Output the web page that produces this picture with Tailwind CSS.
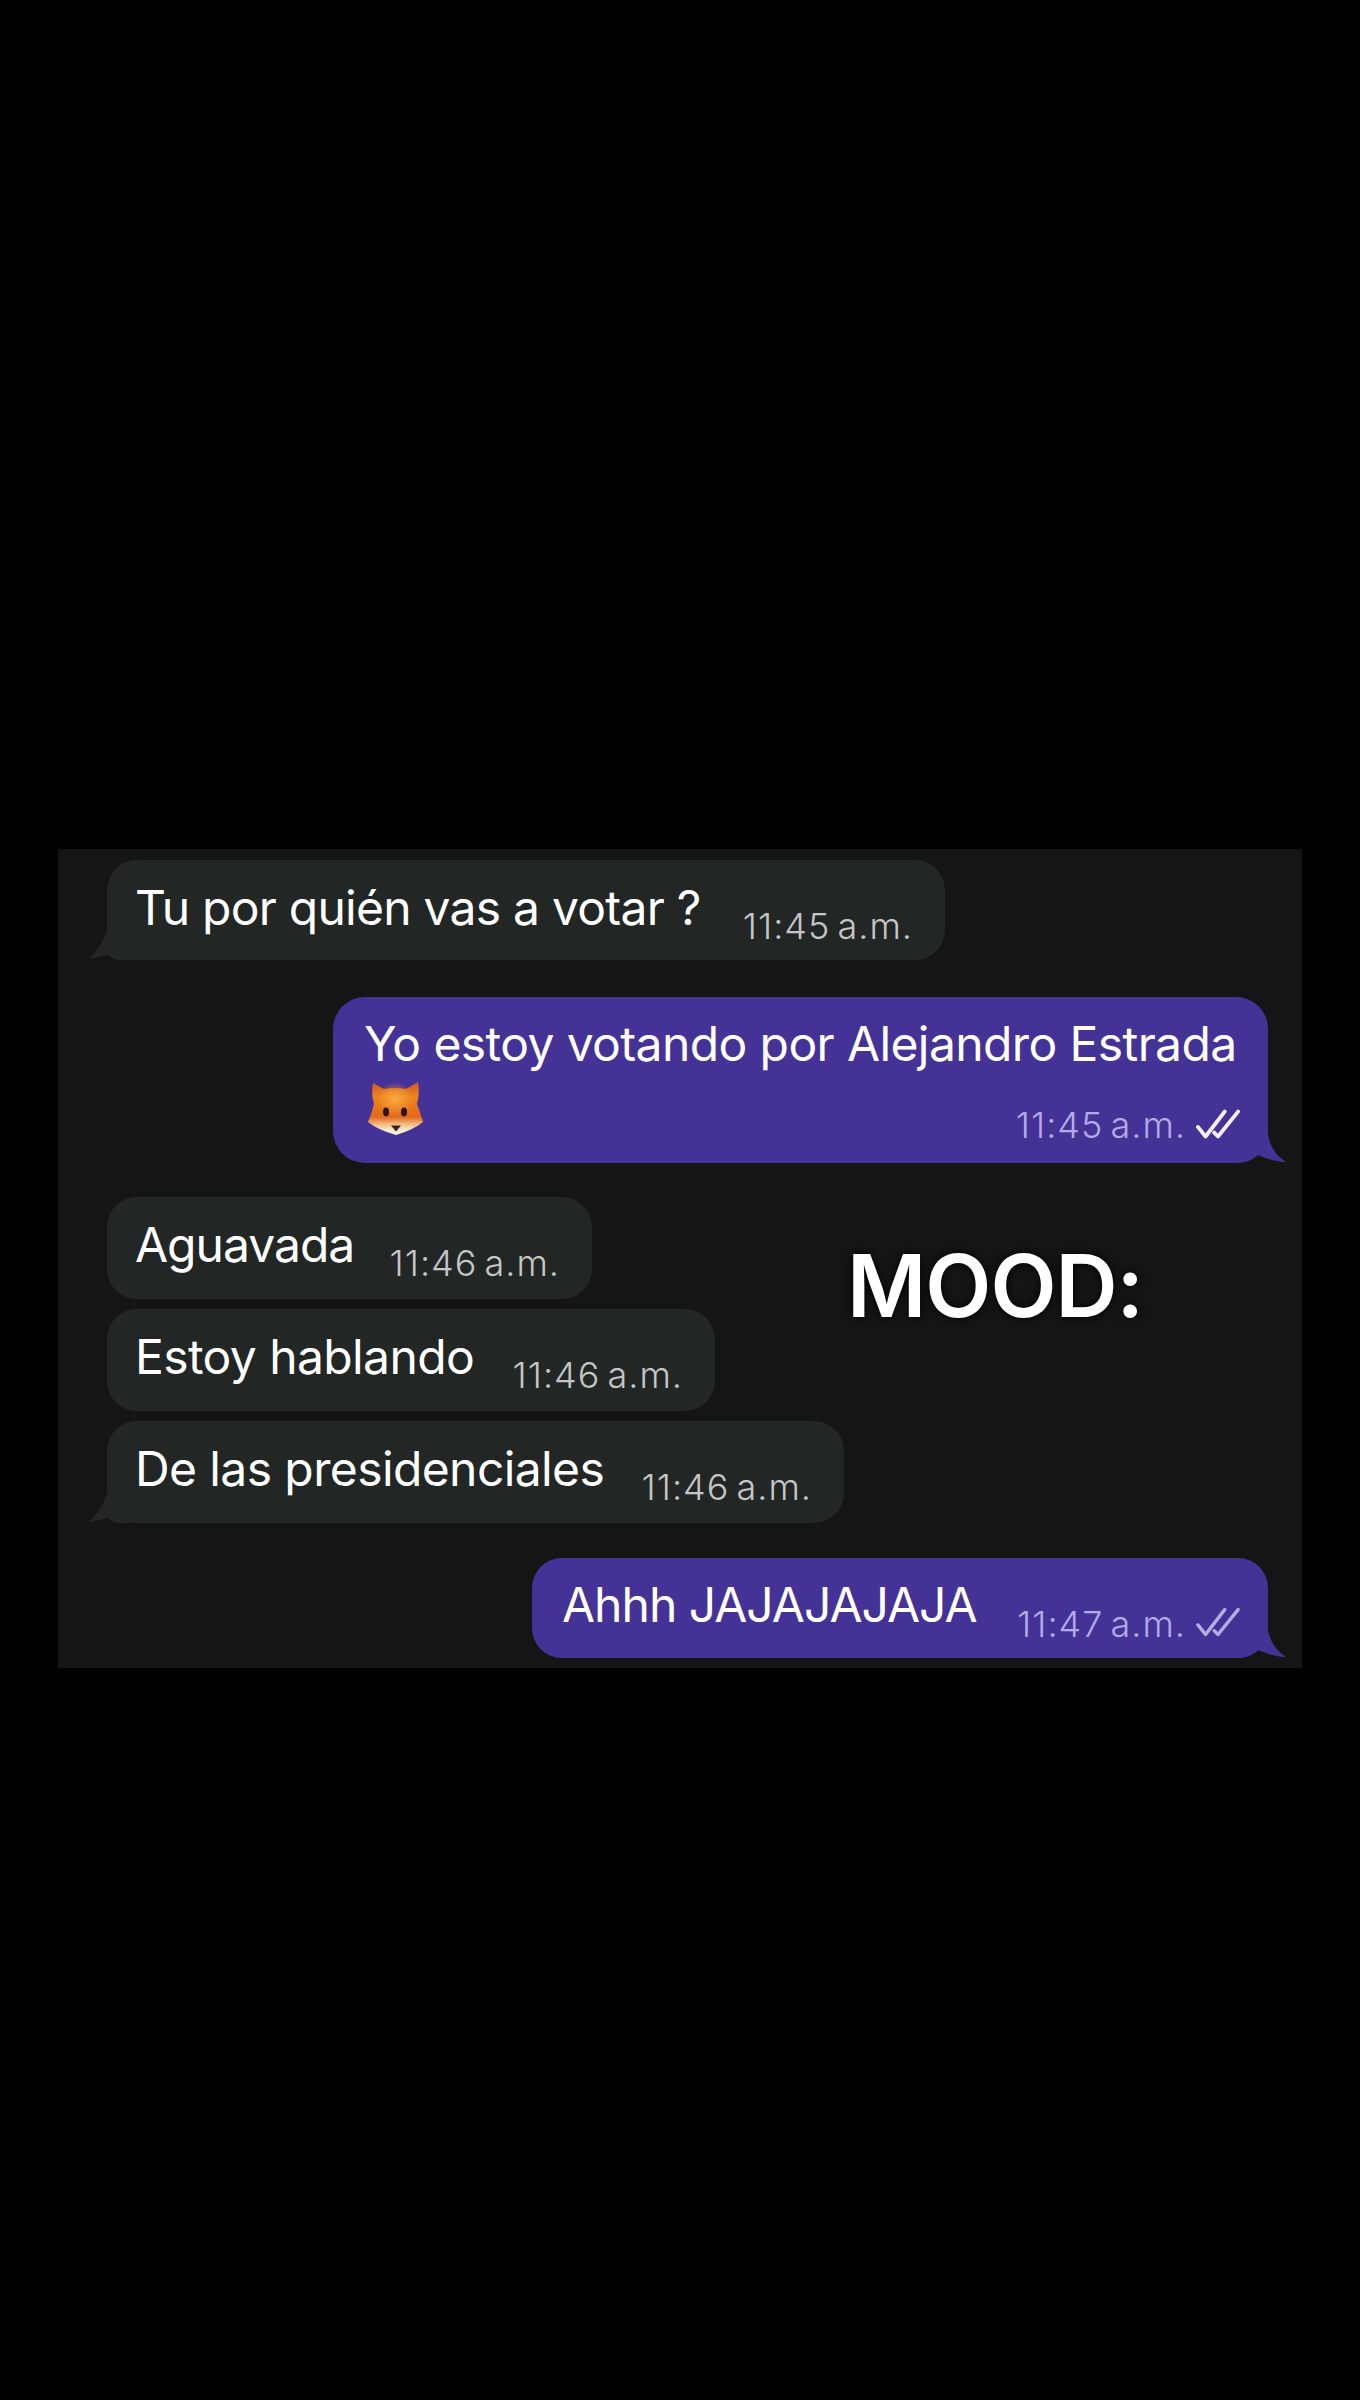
<!DOCTYPE html>
<html lang="en">
  <head>
    <meta charset="UTF-8" />
    <meta name="viewport" content="width=device-width, initial-scale=1.0" />
    <title>Mood</title>
    <script src="https://cdn.jsdelivr.net/npm/@tailwindcss/browser@4"></script>
  </head>
  <body class="bg-black font-['Inter',sans-serif] h-[2400px] overflow-hidden">
    <svg width="0" height="0" class="absolute">
      <defs>
        <linearGradient id="foxFur" x1="0" y1="0" x2="0" y2="1">
          <stop offset="0" stop-color="#c9591b" />
          <stop offset="0.28" stop-color="#ee841d" />
          <stop offset="0.66" stop-color="#e2681a" />
          <stop offset="0.8" stop-color="#f2bd84" />
          <stop offset="0.92" stop-color="#fbeed8" />
        </linearGradient>
        <radialGradient id="foxGlow" cx="0.5" cy="0.4" r="0.42">
          <stop offset="0" stop-color="#fbae48" stop-opacity="0.85" />
          <stop offset="1" stop-color="#fbae48" stop-opacity="0" />
        </radialGradient>
        <path id="tailRight" d="M30 0C30 18 36 31 49 39C40 39 30 36 21 32C16 37 8 40 0 40L0 0Z" />
        <path id="tailLeft" d="M30 0C30 15 38 28 49 39C42 38 35 36 30 35C27 38 23 40 19 40L8 40L8 0Z" />
      </defs>
    </svg>

    <div class="pt-[849px] pl-[58px]">
      <div class="relative w-[1244px] h-[819px] bg-[#151515] pt-[11px] flex flex-col">
        <!-- first message -->
        <div class="relative ml-[49px] w-[838px] h-[100px] shrink-0 bg-[#222625] rounded-[30px] pl-[28px] pr-[32px] pt-[16px] flex items-start text-white">
          <span class="text-[48px] leading-[64px] tracking-[-0.75px]">Tu por quién vas a votar ?</span>
          <span class="ml-auto mt-[18px] text-[36px] leading-[64px] font-light tracking-[1px] [word-spacing:-4px] text-[#c4c7c6]">11:45 a.m.</span>
          <svg class="absolute -left-[19px] bottom-0 -scale-x-100" width="50" height="40" viewBox="0 0 50 40" fill="#222625"><use href="#tailLeft" /></svg>
        </div>

        <div class="relative mt-[37px] ml-[275px] w-[935px] h-[166px] shrink-0 bg-[#443297] rounded-[32px] pl-[31px] pr-[28px] pt-[15px] text-white">
          <p class="text-[48px] leading-[64px] tracking-[-0.6px]">Yo estoy votando por Alejandro Estrada</p>
          <div class="flex items-end justify-between h-[69px]">
            <svg class="ml-[4px] self-start mt-[6px]" width="55" height="53" viewBox="0 0 55 53">
              <path d="M5 1L16 7Q27 5 38 7L50 0Q52 12 49 22Q53 33 55 40Q45 48 28 53Q10 48 0 40Q3 33 6 22Q3 12 5 1Z" fill="url(#foxFur)" />
              <ellipse cx="27" cy="21" rx="22" ry="20" fill="url(#foxGlow)" />
              <ellipse cx="18" cy="30" rx="3" ry="4.400" fill="#2b1408" />
              <ellipse cx="36" cy="30" rx="3" ry="4.400" fill="#2b1408" />
              <path d="M23 43.500H33L28 49.500Z" fill="#33231a" />
            </svg>
            <div class="flex items-center gap-[10px]">
              <span class="text-[36px] leading-[40px] font-light tracking-[1px] [word-spacing:-4px] text-[#b3abe6]">11:45 a.m.</span>
              <svg width="44" height="32" viewBox="-1 -1 46 32" fill="none" stroke="#f4f2ff" stroke-width="4" stroke-linecap="round" stroke-linejoin="round">
                <path d="M1 17L9 27L29 1" />
                <path d="M18 23L22 27L43 1" />
              </svg>
            </div>
          </div>
          <svg class="absolute -right-[19px] bottom-0" width="50" height="40" viewBox="0 0 50 40" fill="#443297"><use href="#tailRight" /></svg>
        </div>

        <div class="mt-[34px] ml-[49px] w-[485px] h-[102px] shrink-0 bg-[#222625] rounded-[30px] pl-[28px] pr-[32px] pt-[16px] flex items-start text-white">
          <span class="text-[48px] leading-[64px] tracking-[-1px]">Aguavada</span>
          <span class="ml-auto mt-[18px] text-[36px] leading-[64px] font-light tracking-[1px] [word-spacing:-4px] text-[#c4c7c6]">11:46 a.m.</span>
        </div>

        <div class="mt-[10px] ml-[49px] w-[608px] h-[102px] shrink-0 bg-[#222625] rounded-[30px] pl-[28px] pr-[32px] pt-[16px] flex items-start text-white">
          <span class="text-[48px] leading-[64px] tracking-[-0.6px]">Estoy hablando</span>
          <span class="ml-auto mt-[18px] text-[36px] leading-[64px] font-light tracking-[1px] [word-spacing:-4px] text-[#c4c7c6]">11:46 a.m.</span>
        </div>

        <div class="relative mt-[10px] ml-[49px] w-[737px] h-[102px] shrink-0 bg-[#222625] rounded-[30px] pl-[28px] pr-[32px] pt-[16px] flex items-start text-white">
          <span class="text-[48px] leading-[64px] tracking-[-0.6px]">De las presidenciales</span>
          <span class="ml-auto mt-[18px] text-[36px] leading-[64px] font-light tracking-[1px] [word-spacing:-4px] text-[#c4c7c6]">11:46 a.m.</span>
          <svg class="absolute -left-[19px] bottom-0 -scale-x-100" width="50" height="40" viewBox="0 0 50 40" fill="#222625"><use href="#tailLeft" /></svg>
        </div>

        <div class="relative mt-[35px] ml-[474px] w-[736px] h-[100px] shrink-0 bg-[#443297] rounded-[30px] pl-[30px] pr-[28px] pt-[15px] flex items-start text-white">
          <span class="text-[48px] leading-[64px] tracking-[-1px]">Ahhh JAJAJAJAJA</span>
          <span class="ml-auto mt-[19px] text-[36px] leading-[64px] font-light tracking-[1px] [word-spacing:-4px] text-[#b3abe6]">11:47 a.m.</span>
          <svg class="ml-[10px] mt-[34px]" width="44" height="32" viewBox="-1 -1 46 32" fill="none" stroke="#b5aee6" stroke-width="3.500" stroke-linecap="round" stroke-linejoin="round">
            <path d="M1 17L9 27L29 1" />
            <path d="M18 23L22 27L43 1" />
          </svg>
          <svg class="absolute -right-[19px] bottom-0" width="50" height="40" viewBox="0 0 50 40" fill="#443297"><use href="#tailRight" /></svg>
        </div>

        <!-- sticker text on top of the chat -->
        <div class="absolute left-[789px] top-[387px] text-[86px] leading-[100px] font-semibold text-white tracking-[-1px] [text-shadow:0_0_8px_#000]">MOOD:</div>
      </div>
    </div>
  </body>
</html>
